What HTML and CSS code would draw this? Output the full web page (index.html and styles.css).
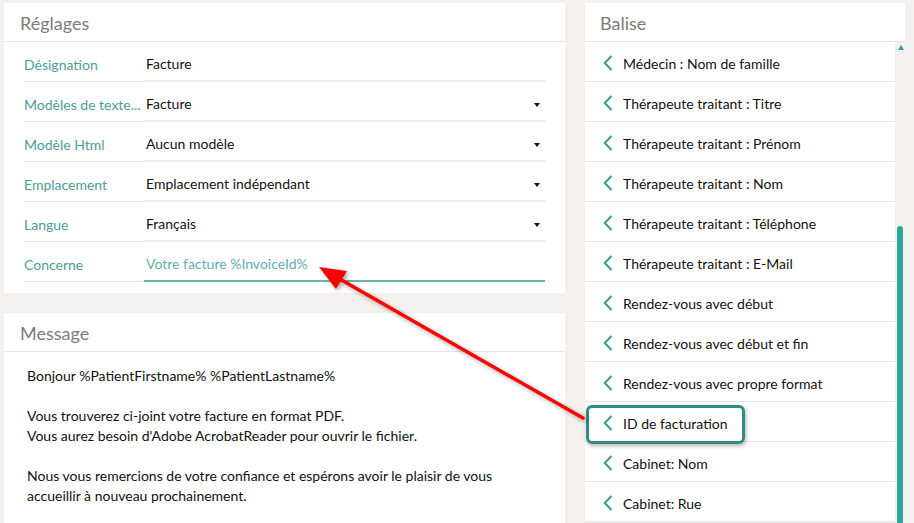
FILE: index.html
```html
<!DOCTYPE html>
<html lang="fr">
<head>
  <meta charset="UTF-8" />
  <meta name="viewport" content="width=device-width, initial-scale=1.0"/>
  <title>Modèle de courriel</title>
  <link rel="stylesheet" href="styles.css">
</head>
<body>
  <div class="page">
    <div class="left">
      <div class="panel settings">
        <div class="panel-title">Réglages</div>
        <div class="form">
          <div class="row">
            <div class="label">Désignation</div>
            <div class="value">Facture</div>
          </div>
          <div class="row">
            <div class="label">Modèles de texte...</div>
            <div class="value select">Facture</div>
          </div>
          <div class="row">
            <div class="label">Modèle Html</div>
            <div class="value select">Aucun modèle</div>
          </div>
          <div class="row">
            <div class="label">Emplacement</div>
            <div class="value select">Emplacement indépendant</div>
          </div>
          <div class="row">
            <div class="label">Langue</div>
            <div class="value select">Français</div>
          </div>
          <div class="row">
            <div class="label">Concerne</div>
            <div class="value focused">Votre facture %InvoiceId%</div>
          </div>
        </div>
      </div>

      <div class="panel message">
        <div class="panel-title">Message</div>
        <div class="message-body">
          <p>Bonjour %PatientFirstname% %PatientLastname%</p>
          <p>Vous trouverez ci-joint votre facture en format PDF.<br>Vous aurez besoin d'Adobe AcrobatReader pour ouvrir le fichier.</p>
          <p>Nous vous remercions de votre confiance et espérons avoir le plaisir de vous accueillir à nouveau prochainement.</p>
        </div>
      </div>
    </div>

    <div class="right">
      <div class="panel-title tags-title">Balise</div>
      <div class="tags">
        <ul class="tag-list" id="tagList"></ul>
        <div class="scrollbar">
          <span class="scroll-up"></span>
          <span class="scroll-thumb"></span>
        </div>
      </div>
    </div>
  </div>

  <!-- annotation arrow pointing at the subject field -->
  <svg class="annotation" width="914" height="523" viewBox="0 0 914 523">
    <g class="arrow">
      <line x1="583" y1="418" x2="338" y2="278" stroke="#ff0000" stroke-width="3.5" stroke-linecap="round"/>
      <polygon points="319,267 347,271 336,289" fill="#ff0000"/>
    </g>
  </svg>

  <script>
    const tags = [
      "Médecin : Nom de famille",
      "Thérapeute traitant : Titre",
      "Thérapeute traitant : Prénom",
      "Thérapeute traitant : Nom",
      "Thérapeute traitant : Téléphone",
      "Thérapeute traitant : E-Mail",
      "Rendez-vous avec début",
      "Rendez-vous avec début et fin",
      "Rendez-vous avec propre format",
      "ID de facturation",
      "Cabinet: Nom",
      "Cabinet: Rue"
    ];

    const chevron = '<svg class="chevron" width="10" height="16" viewBox="0 0 10 16"><path d="M8.5 1 L1.8 8 L8.5 15" fill="none" stroke="#3d9a94" stroke-width="2"/></svg>';

    const list = document.getElementById("tagList");
    tags.forEach((name) => {
      const li = document.createElement("li");
      li.className = "tag";
      li.innerHTML = chevron + '<span>' + name + '</span>';
      if (name === "ID de facturation") {
        const mark = document.createElement("div");
        mark.className = "highlight";
        li.appendChild(mark);
      }
      list.appendChild(li);
    });
  </script>
</body>
</html>
```

FILE: styles.css
```css
body {
  margin: 0;
  height: 523px;
  overflow: hidden;
  background-color: #f3f0ed;
  font-family: Lato, "Noto Sans", sans-serif;
  font-size: 14px;
  color: #111;
  position: relative;
}

.page {
  display: flex;
  gap: 20px;
  padding: 3px 0 0 4px;
}

.left {
  width: 561px;
  display: flex;
  flex-direction: column;
  gap: 20px;
}

.panel {
  background-color: #fff;
}

.panel-title {
  height: 38px;
  line-height: 40px;
  padding-left: 16px;
  font-size: 18px;
  color: #7b7b7b;
  border-bottom: 1px solid #e6e6e6;
  background-color: #fff;
}

/* settings form */
.form {
  margin: 0 20px 11px 20px;
}

.row {
  display: flex;
  height: 40px;
  align-items: flex-end;
}

.label {
  width: 120px;
  height: 39px;
  box-sizing: border-box;
  padding-top: 14px;
  line-height: 16px;
  color: #4a9c97;
  border-bottom: 1px solid #e6e6e6;
  white-space: nowrap;
  overflow: hidden;
}

.value {
  flex: 1;
  height: 40px;
  box-sizing: border-box;
  padding: 14px 0 0 2px;
  line-height: 16px;
  border-bottom: 2px solid #ececec;
  position: relative;
}

.value.select::after {
  content: "";
  position: absolute;
  right: 5px;
  top: 21px;
  border-left: 3.5px solid transparent;
  border-right: 3.5px solid transparent;
  border-top: 4px solid #111;
}

.value.focused {
  color: #5fb0aa;
  border-bottom-color: #62b7ae;
}

/* message */
.message {
  height: 240px;
}

.message-body {
  padding: 14px 23px;
  line-height: 20px;
}

.message-body p {
  margin: 0 0 20px 0;
}

/* tag list */
.right {
  width: 320px;
}

.tags-title {
  padding-left: 15px;
}

.tags {
  display: flex;
}

.tag-list {
  list-style: none;
  margin: 0;
  padding: 0;
  width: 310px;
  background-color: #fff;
}

.tag {
  height: 40px;
  box-sizing: border-box;
  border-bottom: 1px solid #e6e6e6;
  display: flex;
  align-items: center;
  padding: 4px 0 0 18px;
  gap: 10px;
  position: relative;
}

.chevron {
  flex-shrink: 0;
  margin-top: -2px;
}

.scrollbar {
  width: 10px;
  position: relative;
}

.scroll-up {
  position: absolute;
  left: 3px;
  top: 3px;
  border-left: 3px solid transparent;
  border-right: 3px solid transparent;
  border-bottom: 5px solid #2aa89c;
}

.scroll-thumb {
  position: absolute;
  left: 2px;
  top: 184px;
  width: 6px;
  height: 320px;
  border-radius: 3px 3px 0 0;
  background-color: #2aa89c;
}

/* annotations drawn over the page */
.highlight {
  position: absolute;
  left: 1px;
  top: 3px;
  width: 153px;
  height: 33px;
  border: 3px solid #2e8a83;
  border-radius: 6px;
  box-shadow: 1px 2px 4px rgba(0, 0, 0, 0.3);
}

.annotation {
  position: absolute;
  left: 0;
  top: 0;
  pointer-events: none;
}

.arrow {
  filter: drop-shadow(2px 2px 2px rgba(0, 0, 0, 0.35));
}
```
